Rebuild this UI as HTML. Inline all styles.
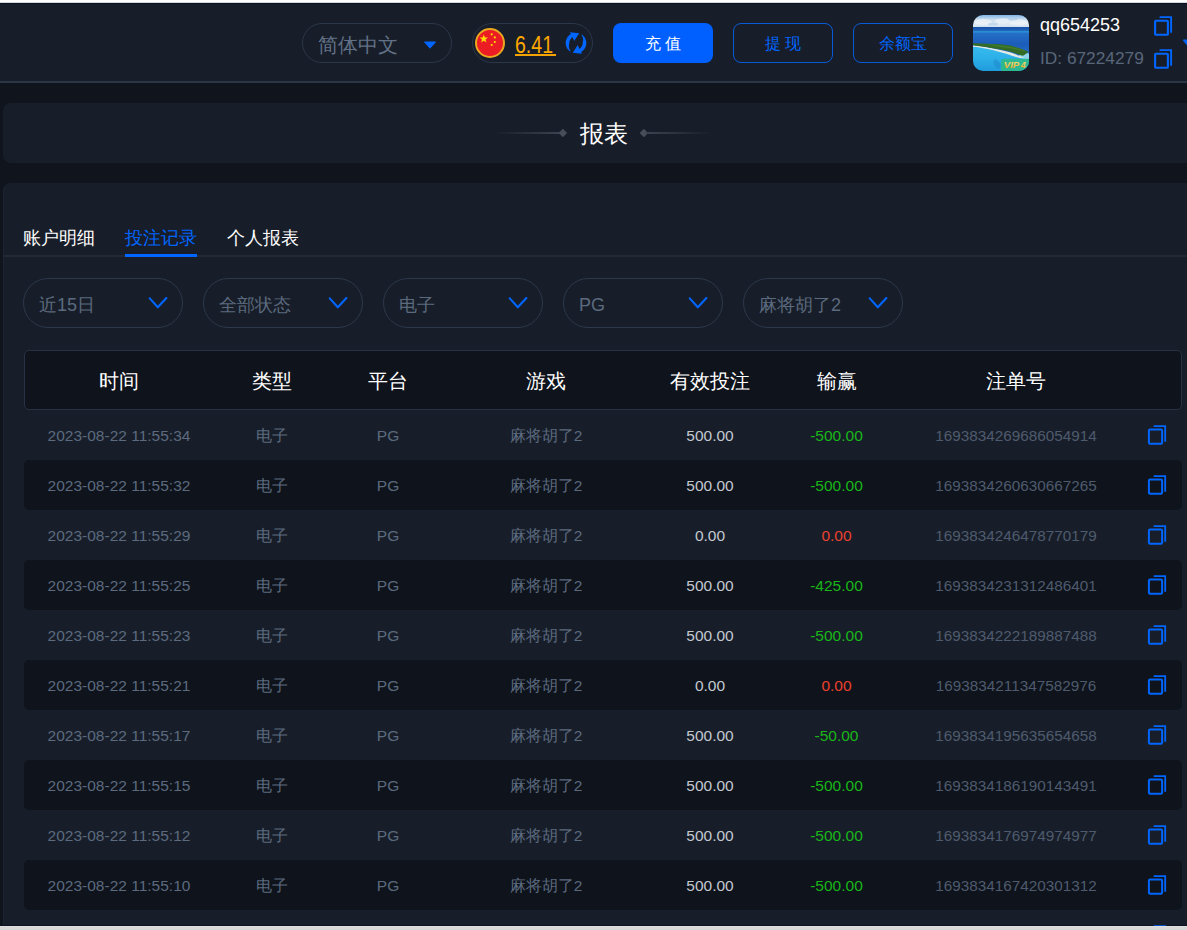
<!DOCTYPE html>
<html><head><meta charset="utf-8">
<style>
*{box-sizing:border-box;margin:0;padding:0}
html,body{width:1187px;height:930px;overflow:hidden;background:#10141c;font-family:"Liberation Sans",sans-serif}
.abs{position:absolute}
#topbar{left:0;top:0;width:1187px;height:3px;background:linear-gradient(180deg,#fff 0,#fff 66%,#d6d8db 66%,#d6d8db 100%)}
#topline{left:0;top:3px;width:1187px;height:1px;background:#0a1322}
#header{left:0;top:4px;width:1187px;height:77px;background:#181e29}
#hborder{left:0;top:81px;width:1187px;height:2px;background:#2a3546}
.pill{border:1px solid #2b3649;border-radius:20px;background:transparent}
.btn{border-radius:8px;font-size:16px;text-align:center;line-height:38px;padding-top:1px}
#card1{left:3px;top:103px;width:1240px;height:60px;background:#181e29;border-radius:8px}
#card2{left:3px;top:183px;width:1240px;height:800px;background:#181e29;border-radius:8px;border-left:1px solid #1d2431}
.tab{font-size:18px;color:#fff;top:226px;line-height:24px;white-space:nowrap}
.dd{top:278px;width:160px;height:50px;border:1px solid #2b384b;border-radius:25px}
.dd span{position:absolute;left:15px;top:2px;line-height:48px;font-size:18px;color:#5b6a7e;white-space:nowrap}
.dd svg{position:absolute;left:124.2px;top:18px}
#thead{left:24px;top:350px;width:1158px;height:60px;background:#0f131b;border:1px solid #283244;border-radius:5px}
.th{top:351px;height:60px;line-height:60px;font-size:20px;color:#fff;text-align:center;white-space:nowrap}
.row{left:24px;width:1158px;height:50px;border-radius:5px}
.row.d{background:#0f131b}
.c{position:absolute;top:1px;height:50px;line-height:50px;font-size:15.5px;text-align:center;white-space:nowrap;color:#5b6a7f}
</style></head><body>
<div class="abs" id="header"></div>
<div class="abs" id="topbar"></div>
<div class="abs" id="topline"></div>
<div class="abs" id="hborder"></div>

<!-- language pill -->
<div class="abs pill" style="left:302px;top:23px;width:150px;height:40px"></div>
<div class="abs" style="left:318px;top:32px;font-size:20px;line-height:26px;color:#627186">简体中文</div>
<svg class="abs" style="left:423px;top:41px" width="14" height="8" viewBox="0 0 14 8"><path d="M1.5 1 H12.5 L7 7.2 Z" fill="#0066ff" stroke="#0066ff" stroke-linejoin="round" stroke-width="1"/></svg>

<!-- balance pill -->
<div class="abs pill" style="left:472px;top:23px;width:121px;height:40px"></div>
<svg class="abs" style="left:475px;top:28px" width="30" height="30" viewBox="0 0 30 30">
<circle cx="15" cy="15" r="14" fill="#ec1c24" stroke="#eaa820" stroke-width="2"/>
<polygon fill="#ffde00" points="8.8,6.5 9.9,9.6 13.1,9.6 10.5,11.5 11.5,14.6 8.8,12.7 6.1,14.6 7.1,11.5 4.5,9.6 7.7,9.6"/>
<circle cx="16.7" cy="6.3" r="1.1" fill="#ffde00"/>
<circle cx="19.8" cy="9.4" r="1.1" fill="#ffde00"/>
<circle cx="19.8" cy="14" r="1.1" fill="#ffde00"/>
<circle cx="16.7" cy="17" r="1.1" fill="#ffde00"/>
</svg>
<div class="abs" style="left:515px;top:32px;font-size:23px;line-height:26px;color:#ffa800;transform:scaleX(0.85);transform-origin:0 0">6.41</div>
<div class="abs" style="left:515px;top:54px;width:41px;height:2px;background:#f5a300"></div>
<svg class="abs" style="left:560px;top:28px" width="32" height="30" viewBox="0 0 32 30">
<path d="M10.09 23.44 L9.38 22.89 L8.72 22.28 L8.11 21.62 L7.56 20.91 L7.08 20.15 L6.67 19.35 L6.32 18.52 L6.05 17.67 L5.86 16.79 L5.74 15.90 L5.70 15.00 L5.74 14.10 L5.86 13.21 L6.05 12.33 L6.32 11.48 L6.67 10.65 L7.08 9.85 L7.56 9.09 L8.11 8.38 L8.72 7.72 L9.38 7.11 L10.09 6.56 L10.85 6.08 L10.00 4.20 L19.20 5.20 L14.20 12.90 L12.65 9.20 L12.16 9.51 L11.69 9.87 L11.26 10.26 L10.87 10.69 L10.51 11.16 L10.20 11.65 L9.93 12.17 L9.70 12.71 L9.53 13.27 L9.40 13.84 L9.33 14.42 L9.30 15.00 L9.33 15.58 L9.12 16.21 L8.97 16.88 L8.89 17.59 L8.88 18.32 L8.94 19.07 L9.09 19.84 L9.31 20.61 L9.62 21.38 L10.02 22.13 L10.49 22.86 Z" fill="#0066ff"/>
<path d="M10.09 23.44 L9.38 22.89 L8.72 22.28 L8.11 21.62 L7.56 20.91 L7.08 20.15 L6.67 19.35 L6.32 18.52 L6.05 17.67 L5.86 16.79 L5.74 15.90 L5.70 15.00 L5.74 14.10 L5.86 13.21 L6.05 12.33 L6.32 11.48 L6.67 10.65 L7.08 9.85 L7.56 9.09 L8.11 8.38 L8.72 7.72 L9.38 7.11 L10.09 6.56 L10.85 6.08 L10.00 4.20 L19.20 5.20 L14.20 12.90 L12.65 9.20 L12.16 9.51 L11.69 9.87 L11.26 10.26 L10.87 10.69 L10.51 11.16 L10.20 11.65 L9.93 12.17 L9.70 12.71 L9.53 13.27 L9.40 13.84 L9.33 14.42 L9.30 15.00 L9.33 15.58 L9.12 16.21 L8.97 16.88 L8.89 17.59 L8.88 18.32 L8.94 19.07 L9.09 19.84 L9.31 20.61 L9.62 21.38 L10.02 22.13 L10.49 22.86 Z" fill="#0066ff" transform="rotate(180 16 15)"/>
</svg>

<!-- buttons -->
<div class="abs btn" style="left:613px;top:23px;width:100px;height:40px;background:#0060ff;color:#fff;line-height:38px;letter-spacing:4px;padding-left:4px;padding-top:2px">充值</div>
<div class="abs btn" style="left:733px;top:23px;width:100px;height:40px;border:1px solid #0a5ad8;color:#0066ff;letter-spacing:4px;padding-left:4px">提现</div>
<div class="abs btn" style="left:853px;top:23px;width:100px;height:40px;border:1px solid #0a5ad8;color:#0066ff">余额宝</div>

<!-- avatar -->
<svg class="abs" style="left:973px;top:15px" width="56" height="56" viewBox="0 0 56 56">
<defs>
<clipPath id="avc"><rect x="0" y="0" width="56" height="56" rx="10"/></clipPath>
<linearGradient id="sky" x1="0" y1="0" x2="0" y2="1"><stop offset="0" stop-color="#7fb4e6"/><stop offset="0.35" stop-color="#c9dcee"/><stop offset="0.7" stop-color="#e2ebf3"/><stop offset="1" stop-color="#d2e2f0"/></linearGradient>
<linearGradient id="sea" x1="0" y1="12" x2="0" y2="46" gradientUnits="userSpaceOnUse"><stop offset="0" stop-color="#1a50a8"/><stop offset="0.1" stop-color="#1f62b8"/><stop offset="0.14" stop-color="#2b9ad8"/><stop offset="0.18" stop-color="#2470c6"/><stop offset="0.5" stop-color="#1c5cba"/><stop offset="1" stop-color="#2a78cc"/></linearGradient>
<linearGradient id="lag" x1="0" y1="30" x2="0" y2="56" gradientUnits="userSpaceOnUse"><stop offset="0" stop-color="#38bcee"/><stop offset="0.5" stop-color="#2cb0e8"/><stop offset="1" stop-color="#209cdc"/></linearGradient>
<linearGradient id="gold" x1="0" y1="46" x2="0" y2="54" gradientUnits="userSpaceOnUse"><stop offset="0" stop-color="#ffe27a"/><stop offset="1" stop-color="#e8a41e"/></linearGradient>
</defs>
<g clip-path="url(#avc)">
<rect x="0" y="0" width="56" height="12.2" fill="url(#sky)"/>
<ellipse cx="10" cy="7" rx="9" ry="3" fill="#f0f4f8" opacity="0.7"/>
<ellipse cx="30" cy="6" rx="8" ry="2.5" fill="#eef3f8" opacity="0.7"/>
<ellipse cx="46" cy="7.5" rx="9" ry="3" fill="#f0f4f8" opacity="0.7"/>
<ellipse cx="20" cy="9" rx="5" ry="1.5" fill="#a9c8e6" opacity="0.5"/>
<ellipse cx="40" cy="4" rx="5" ry="1.5" fill="#a9c8e6" opacity="0.5"/>
<rect x="0" y="12" width="56" height="34" fill="url(#sea)"/>
<path d="M0 30.5 C15 32 30 36 44 40.5 C50 42.5 54 43.5 56 43.5 L56 56 L0 56 Z" fill="url(#lag)"/>
<path d="M47 38 C51 37.5 54 38 56 38.5 L56 46 C53 45 49 43 46 41 Z" fill="#8fd4ee"/>
<path d="M22 44 C26 46 30 50 26 54 C22 52 18 48 22 44 Z" fill="#1f86c8" opacity="0.5"/>
<path d="M0 30.2 C8 30.8 18 33 30 35.6 C38 37.5 45 39.8 51.5 43.3 C46 43.5 40 41 34 39 C22 35.5 10 32.3 0 31.7 Z" fill="#e4e9e4"/>
<path d="M0 28.3 C8 28.5 20 29 30 29.6 C38 30.3 45 32.5 55 36.4 L54.8 37.4 C53 38.5 51.5 40 49.6 40.8 C46 39.5 42 38 38 36.8 C30 34.8 20 33 0 30.3 Z" fill="#336b26"/>
<path d="M12 29.2 C22 29.8 32 30.6 42 32.8 C46 33.8 50 35 53 36.2 C48 35.6 42 34.2 34 32.8 C26 31.5 18 30.3 12 29.2 Z" fill="#4f8a34" opacity="0.6"/>
<rect x="28" y="43.8" width="30" height="14" rx="3" fill="#2db892"/>
<text x="30.8" y="53.4" font-family="Liberation Sans" font-size="9.6" font-weight="bold" font-style="italic" fill="url(#gold)">VIP</text>
<text x="47.8" y="53.4" font-family="Liberation Sans" font-size="9" font-weight="bold" font-style="italic" fill="url(#gold)">4</text>
</g>
</svg>
<div class="abs" style="left:1040px;top:13px;font-size:18px;line-height:24px;color:#fff">qq654253</div>
<div class="abs" style="left:1040px;top:46px;font-size:17.3px;line-height:24px;color:#58667a">ID: 67224279</div>

<svg class="abs" style="left:1153px;top:15px" width="21" height="22" viewBox="0 0 21 22"><path d="M6.6 2.1 H18.1 V17.8" fill="none" stroke="#0066ff" stroke-width="1.9"/><rect x="2.1" y="5.7" width="12.8" height="14.1" rx="0.9" fill="none" stroke="#0066ff" stroke-width="2.1"/></svg>
<svg class="abs" style="left:1153px;top:48px" width="21" height="22" viewBox="0 0 21 22"><path d="M6.6 2.1 H18.1 V17.8" fill="none" stroke="#0066ff" stroke-width="1.9"/><rect x="2.1" y="5.7" width="12.8" height="14.1" rx="0.9" fill="none" stroke="#0066ff" stroke-width="2.1"/></svg>
<svg class="abs" style="left:1182px;top:39px" width="14" height="9" viewBox="0 0 14 9"><path d="M1.5 1.2 H12.5 L7 7.8 Z" fill="#0066ff" stroke="#0066ff" stroke-width="1.2" stroke-linejoin="round"/></svg>

<!-- title card -->
<div class="abs" id="card1"></div>
<div class="abs" style="left:579.5px;top:118px;font-size:24px;line-height:32px;color:#fff">报表</div>

<div class="abs" style="left:494px;top:132px;width:66px;height:2px;background:linear-gradient(90deg,rgba(60,67,80,0),#3c4350)"></div>
<div class="abs" style="left:559.6px;top:130.2px;width:5.8px;height:5.8px;background:#474e5a;transform:rotate(45deg)"></div>
<div class="abs" style="left:640.6px;top:130.2px;width:5.8px;height:5.8px;background:#474e5a;transform:rotate(45deg)"></div>
<div class="abs" style="left:646px;top:132px;width:66px;height:2px;background:linear-gradient(90deg,#3c4350,rgba(60,67,80,0))"></div>

<!-- main card -->
<div class="abs" id="card2"></div>
<div class="abs" style="left:3px;top:255px;width:1240px;height:2px;background:#212836"></div>
<div class="abs tab" style="left:23px">账户明细</div>
<div class="abs tab" style="left:125px;color:#0066ff">投注记录</div>
<div class="abs" style="left:125px;top:254px;width:72px;height:3px;background:#0066ff"></div>
<div class="abs tab" style="left:227px">个人报表</div>

<div class="abs dd" style="left:23px"><span>近15日</span><svg width="20" height="13" viewBox="0 0 20 13"><path d="M1.8 1.4 L9.8 10.3 L18.4 1" fill="none" stroke="#0066ff" stroke-width="2.1" stroke-linecap="round" stroke-linejoin="round"/></svg></div>
<div class="abs dd" style="left:203px"><span>全部状态</span><svg width="20" height="13" viewBox="0 0 20 13"><path d="M1.8 1.4 L9.8 10.3 L18.4 1" fill="none" stroke="#0066ff" stroke-width="2.1" stroke-linecap="round" stroke-linejoin="round"/></svg></div>
<div class="abs dd" style="left:383px"><span>电子</span><svg width="20" height="13" viewBox="0 0 20 13"><path d="M1.8 1.4 L9.8 10.3 L18.4 1" fill="none" stroke="#0066ff" stroke-width="2.1" stroke-linecap="round" stroke-linejoin="round"/></svg></div>
<div class="abs dd" style="left:563px"><span>PG</span><svg width="20" height="13" viewBox="0 0 20 13"><path d="M1.8 1.4 L9.8 10.3 L18.4 1" fill="none" stroke="#0066ff" stroke-width="2.1" stroke-linecap="round" stroke-linejoin="round"/></svg></div>
<div class="abs dd" style="left:743px"><span>麻将胡了2</span><svg width="20" height="13" viewBox="0 0 20 13"><path d="M1.8 1.4 L9.8 10.3 L18.4 1" fill="none" stroke="#0066ff" stroke-width="2.1" stroke-linecap="round" stroke-linejoin="round"/></svg></div>

<div class="abs" id="thead"></div>
<div class="abs th" style="left:24px;width:190px">时间</div>
<div class="abs th" style="left:214px;width:116px">类型</div>
<div class="abs th" style="left:330px;width:116px">平台</div>
<div class="abs th" style="left:446px;width:200px">游戏</div>
<div class="abs th" style="left:646px;width:128px">有效投注</div>
<div class="abs th" style="left:774px;width:125px">输赢</div>
<div class="abs th" style="left:899px;width:234px">注单号</div>

<div class="abs" style="left:0;top:925px;width:1187px;height:1px;background:#0a1322"></div>
<div id="rows">
<div class="abs row" style="top:410px">
<span class="c" style="left:0;width:190px">2023-08-22 11:55:34</span><span class="c" style="left:190px;width:116px">电子</span><span class="c" style="left:306px;width:116px">PG</span><span class="c" style="left:422px;width:200px">麻将胡了2</span><span class="c" style="left:622px;width:128px;color:#c3c8d1">500.00</span><span class="c" style="left:750px;width:125px;color:#18b618">-500.00</span><span class="c" style="left:875px;width:234px;color:#4e5b6e;font-size:15.3px">1693834269686054914</span><svg class="cp" style="position:absolute;left:1123px;top:15px" width="20" height="21" viewBox="0 0 20 21"><path d="M6.7 1.1 H18.2 V16.8" fill="none" stroke="#0066ff" stroke-width="1.8"/><rect x="1.9" y="4.5" width="13.2" height="14.3" rx="1.2" fill="none" stroke="#0066ff" stroke-width="2"/></svg>
</div>
<div class="abs row d" style="top:460px">
<span class="c" style="left:0;width:190px">2023-08-22 11:55:32</span><span class="c" style="left:190px;width:116px">电子</span><span class="c" style="left:306px;width:116px">PG</span><span class="c" style="left:422px;width:200px">麻将胡了2</span><span class="c" style="left:622px;width:128px;color:#c3c8d1">500.00</span><span class="c" style="left:750px;width:125px;color:#18b618">-500.00</span><span class="c" style="left:875px;width:234px;color:#4e5b6e;font-size:15.3px">1693834260630667265</span><svg class="cp" style="position:absolute;left:1123px;top:15px" width="20" height="21" viewBox="0 0 20 21"><path d="M6.7 1.1 H18.2 V16.8" fill="none" stroke="#0066ff" stroke-width="1.8"/><rect x="1.9" y="4.5" width="13.2" height="14.3" rx="1.2" fill="none" stroke="#0066ff" stroke-width="2"/></svg>
</div>
<div class="abs row" style="top:510px">
<span class="c" style="left:0;width:190px">2023-08-22 11:55:29</span><span class="c" style="left:190px;width:116px">电子</span><span class="c" style="left:306px;width:116px">PG</span><span class="c" style="left:422px;width:200px">麻将胡了2</span><span class="c" style="left:622px;width:128px;color:#c3c8d1">0.00</span><span class="c" style="left:750px;width:125px;color:#e8412e">0.00</span><span class="c" style="left:875px;width:234px;color:#4e5b6e;font-size:15.3px">1693834246478770179</span><svg class="cp" style="position:absolute;left:1123px;top:15px" width="20" height="21" viewBox="0 0 20 21"><path d="M6.7 1.1 H18.2 V16.8" fill="none" stroke="#0066ff" stroke-width="1.8"/><rect x="1.9" y="4.5" width="13.2" height="14.3" rx="1.2" fill="none" stroke="#0066ff" stroke-width="2"/></svg>
</div>
<div class="abs row d" style="top:560px">
<span class="c" style="left:0;width:190px">2023-08-22 11:55:25</span><span class="c" style="left:190px;width:116px">电子</span><span class="c" style="left:306px;width:116px">PG</span><span class="c" style="left:422px;width:200px">麻将胡了2</span><span class="c" style="left:622px;width:128px;color:#c3c8d1">500.00</span><span class="c" style="left:750px;width:125px;color:#18b618">-425.00</span><span class="c" style="left:875px;width:234px;color:#4e5b6e;font-size:15.3px">1693834231312486401</span><svg class="cp" style="position:absolute;left:1123px;top:15px" width="20" height="21" viewBox="0 0 20 21"><path d="M6.7 1.1 H18.2 V16.8" fill="none" stroke="#0066ff" stroke-width="1.8"/><rect x="1.9" y="4.5" width="13.2" height="14.3" rx="1.2" fill="none" stroke="#0066ff" stroke-width="2"/></svg>
</div>
<div class="abs row" style="top:610px">
<span class="c" style="left:0;width:190px">2023-08-22 11:55:23</span><span class="c" style="left:190px;width:116px">电子</span><span class="c" style="left:306px;width:116px">PG</span><span class="c" style="left:422px;width:200px">麻将胡了2</span><span class="c" style="left:622px;width:128px;color:#c3c8d1">500.00</span><span class="c" style="left:750px;width:125px;color:#18b618">-500.00</span><span class="c" style="left:875px;width:234px;color:#4e5b6e;font-size:15.3px">1693834222189887488</span><svg class="cp" style="position:absolute;left:1123px;top:15px" width="20" height="21" viewBox="0 0 20 21"><path d="M6.7 1.1 H18.2 V16.8" fill="none" stroke="#0066ff" stroke-width="1.8"/><rect x="1.9" y="4.5" width="13.2" height="14.3" rx="1.2" fill="none" stroke="#0066ff" stroke-width="2"/></svg>
</div>
<div class="abs row d" style="top:660px">
<span class="c" style="left:0;width:190px">2023-08-22 11:55:21</span><span class="c" style="left:190px;width:116px">电子</span><span class="c" style="left:306px;width:116px">PG</span><span class="c" style="left:422px;width:200px">麻将胡了2</span><span class="c" style="left:622px;width:128px;color:#c3c8d1">0.00</span><span class="c" style="left:750px;width:125px;color:#e8412e">0.00</span><span class="c" style="left:875px;width:234px;color:#4e5b6e;font-size:15.3px">1693834211347582976</span><svg class="cp" style="position:absolute;left:1123px;top:15px" width="20" height="21" viewBox="0 0 20 21"><path d="M6.7 1.1 H18.2 V16.8" fill="none" stroke="#0066ff" stroke-width="1.8"/><rect x="1.9" y="4.5" width="13.2" height="14.3" rx="1.2" fill="none" stroke="#0066ff" stroke-width="2"/></svg>
</div>
<div class="abs row" style="top:710px">
<span class="c" style="left:0;width:190px">2023-08-22 11:55:17</span><span class="c" style="left:190px;width:116px">电子</span><span class="c" style="left:306px;width:116px">PG</span><span class="c" style="left:422px;width:200px">麻将胡了2</span><span class="c" style="left:622px;width:128px;color:#c3c8d1">500.00</span><span class="c" style="left:750px;width:125px;color:#18b618">-50.00</span><span class="c" style="left:875px;width:234px;color:#4e5b6e;font-size:15.3px">1693834195635654658</span><svg class="cp" style="position:absolute;left:1123px;top:15px" width="20" height="21" viewBox="0 0 20 21"><path d="M6.7 1.1 H18.2 V16.8" fill="none" stroke="#0066ff" stroke-width="1.8"/><rect x="1.9" y="4.5" width="13.2" height="14.3" rx="1.2" fill="none" stroke="#0066ff" stroke-width="2"/></svg>
</div>
<div class="abs row d" style="top:760px">
<span class="c" style="left:0;width:190px">2023-08-22 11:55:15</span><span class="c" style="left:190px;width:116px">电子</span><span class="c" style="left:306px;width:116px">PG</span><span class="c" style="left:422px;width:200px">麻将胡了2</span><span class="c" style="left:622px;width:128px;color:#c3c8d1">500.00</span><span class="c" style="left:750px;width:125px;color:#18b618">-500.00</span><span class="c" style="left:875px;width:234px;color:#4e5b6e;font-size:15.3px">1693834186190143491</span><svg class="cp" style="position:absolute;left:1123px;top:15px" width="20" height="21" viewBox="0 0 20 21"><path d="M6.7 1.1 H18.2 V16.8" fill="none" stroke="#0066ff" stroke-width="1.8"/><rect x="1.9" y="4.5" width="13.2" height="14.3" rx="1.2" fill="none" stroke="#0066ff" stroke-width="2"/></svg>
</div>
<div class="abs row" style="top:810px">
<span class="c" style="left:0;width:190px">2023-08-22 11:55:12</span><span class="c" style="left:190px;width:116px">电子</span><span class="c" style="left:306px;width:116px">PG</span><span class="c" style="left:422px;width:200px">麻将胡了2</span><span class="c" style="left:622px;width:128px;color:#c3c8d1">500.00</span><span class="c" style="left:750px;width:125px;color:#18b618">-500.00</span><span class="c" style="left:875px;width:234px;color:#4e5b6e;font-size:15.3px">1693834176974974977</span><svg class="cp" style="position:absolute;left:1123px;top:15px" width="20" height="21" viewBox="0 0 20 21"><path d="M6.7 1.1 H18.2 V16.8" fill="none" stroke="#0066ff" stroke-width="1.8"/><rect x="1.9" y="4.5" width="13.2" height="14.3" rx="1.2" fill="none" stroke="#0066ff" stroke-width="2"/></svg>
</div>
<div class="abs row d" style="top:860px">
<span class="c" style="left:0;width:190px">2023-08-22 11:55:10</span><span class="c" style="left:190px;width:116px">电子</span><span class="c" style="left:306px;width:116px">PG</span><span class="c" style="left:422px;width:200px">麻将胡了2</span><span class="c" style="left:622px;width:128px;color:#c3c8d1">500.00</span><span class="c" style="left:750px;width:125px;color:#18b618">-500.00</span><span class="c" style="left:875px;width:234px;color:#4e5b6e;font-size:15.3px">1693834167420301312</span><svg class="cp" style="position:absolute;left:1123px;top:15px" width="20" height="21" viewBox="0 0 20 21"><path d="M6.7 1.1 H18.2 V16.8" fill="none" stroke="#0066ff" stroke-width="1.8"/><rect x="1.9" y="4.5" width="13.2" height="14.3" rx="1.2" fill="none" stroke="#0066ff" stroke-width="2"/></svg>
</div>
<div class="abs row" style="top:910px">
<span class="c" style="left:0;width:190px">2023-08-22 11:55:08</span><span class="c" style="left:190px;width:116px">电子</span><span class="c" style="left:306px;width:116px">PG</span><span class="c" style="left:422px;width:200px">麻将胡了2</span><span class="c" style="left:622px;width:128px;color:#c3c8d1">500.00</span><span class="c" style="left:750px;width:125px;color:#18b618">-500.00</span><span class="c" style="left:875px;width:234px;color:#4e5b6e;font-size:15.3px">1693834158312345678</span><svg class="cp" style="position:absolute;left:1123px;top:15px" width="20" height="21" viewBox="0 0 20 21"><path d="M6.7 1.1 H18.2 V16.8" fill="none" stroke="#0066ff" stroke-width="1.8"/><rect x="1.9" y="4.5" width="13.2" height="14.3" rx="1.2" fill="none" stroke="#0066ff" stroke-width="2"/></svg>
</div>
</div>
<div class="abs" style="left:0;top:926px;width:1187px;height:1px;background:#dfdfdd"></div>
<div class="abs" style="left:0;top:927px;width:1187px;height:3px;background:#d9d9d9"></div>
</body></html>
